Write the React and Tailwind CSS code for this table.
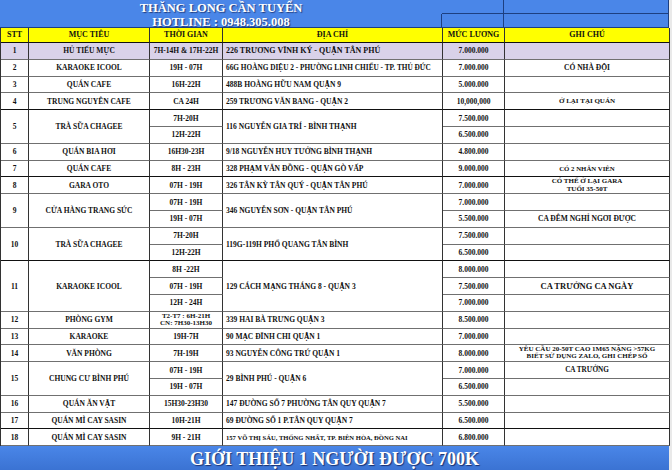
import React from "react";

const rows = [
  { stt: "1", name: "HỦ TIẾU MỰC", times: ["7H-14H & 17H-22H"], addr: "226 TRƯƠNG VĨNH KÝ - QUẬN TÂN PHÚ", as: "text-[8px]", sal: ["7.000.000"], notes: [""], bg: "lav" },
  { stt: "2", name: "KARAOKE ICOOL", times: ["19H - 07H"], addr: "66G HOÀNG DIỆU 2 - PHƯỜNG LINH CHIỂU - TP. THỦ ĐỨC", as: "text-[7.3px]", sal: ["7.000.000"], notes: ["CÓ NHÀ ĐỘI"] },
  { stt: "3", name: "QUÁN CAFE", times: ["16H-22H"], addr: "488B HOÀNG HỮU NAM QUẬN 9", sal: ["5.000.000"], notes: [""] },
  { stt: "4", name: "TRUNG NGUYÊN CAFE", times: ["CA 24H"], addr: "259 TRƯƠNG VĂN BANG - QUẬN 2", sal: ["10,000,000"], notes: ["Ở LẠI TẠI QUÁN"], ns: "text-[7px]", thick: true },
  { stt: "5", name: "TRÀ SỮA CHAGEE", times: ["7H-20H", "12H-22H"], addr: "116 NGUYỄN GIA TRÍ - BÌNH THẠNH", sal: ["7.500.000", "6.500.000"], notes: ["", ""] },
  { stt: "6", name: "QUÁN BIA HƠI", times: ["16H30-23H"], addr: "9/18 NGUYỄN HUY TƯỞNG BÌNH THẠNH", sal: ["4.800.000"], notes: [""] },
  { stt: "7", name: "QUÁN CAFE", times: ["8H - 23H"], addr: "328 PHẠM VĂN ĐỒNG - QUẬN GÒ VẤP", sal: ["9.000.000"], notes: ["CÓ 2 NHÂN VIÊN"], ns: "text-[6.8px]", thick: true },
  { stt: "8", name: "GARA OTO", times: ["07H - 19H"], addr: "326 TÂN KỲ TÂN QUÝ  - QUẬN TÂN PHÚ", sal: ["7.000.000"], notes: [["CÓ THỂ Ở LẠI GARA", "TUỔI 35-50T"]], ns: "text-[7.5px] leading-[8px]" },
  { stt: "9", name: "CỬA HÀNG TRANG SỨC", times: ["07H - 19H", "19H - 07H"], addr: "346 NGUYỄN SƠN - QUẬN TÂN PHÚ", sal: ["7.000.000", "5.500.000"], notes: ["", "CA  ĐÊM NGHỈ NGƠI ĐƯỢC"], ns: "text-[7.5px]" },
  { stt: "10", name: "TRÀ SỮA CHAGEE", times: ["7H-20H", "12H-22H"], addr: "119G-119H PHỔ QUANG TÂN BÌNH", sal: ["7.500.000", "6.500.000"], notes: ["", ""], thick: true },
  { stt: "11", name: "KARAOKE ICOOL", times: ["8H -22H", "07H - 19H", "12H - 24H"], addr: "129 CÁCH MẠNG THÁNG 8 - QUẬN 3", sal: ["8.000.000", "7.500.000", "7.000.000"], notes: ["", "CA TRƯỞNG CA NGÀY", ""], ns: "text-[8.5px]" },
  { stt: "12", name: "PHÒNG GYM", times: [["T2-T7 : 6H-21H", "CN: 7H30-13H30"]], addr: "339 HAI BÀ TRƯNG QUẬN 3", sal: ["8.500.000"], notes: [""] },
  { stt: "13", name: "KARAOKE", times: ["19H-7H"], addr: "90 MẠC ĐĨNH CHI QUẬN 1", sal: ["7.000.000"], notes: [""] },
  { stt: "14", name: "VĂN PHÒNG", times: ["7H-19H"], addr: "93 NGUYỄN CÔNG TRỨ QUẬN 1", sal: ["8.000.000"], notes: [["YÊU CẦU 20-50T CAO 1M65 NẶNG >57KG", "BIẾT SỬ DỤNG ZALO, GHI CHÉP SỔ"]], ns: "text-[7px] leading-[7.5px]" },
  { stt: "15", name: "CHUNG CƯ BÌNH PHÚ", times: ["07H - 19H", "19H - 07H"], addr: "29 BÌNH PHÚ - QUẬN 6", sal: ["7.000.000", "6.500.000"], notes: ["CA TRƯỞNG", ""], ns: "text-[7.2px]" },
  { stt: "16", name: "QUÁN ĂN VẶT", times: ["15H30-23H30"], addr: "147 ĐƯỜNG SỐ 7 PHƯỜNG TÂN QUY QUẬN 7", sal: ["5.500.000"], notes: [""] },
  { stt: "17", name: "QUÁN MÌ CAY SASIN", times: ["10H-21H"], addr: "69 ĐƯỜNG SỐ 1 P.TÂN QUY QUẬN 7", sal: ["6.500.000"], notes: [""], thick: true },
  { stt: "18", name: "QUÁN MÌ CAY SASIN", times: ["9H - 21H"], addr: "157 VÕ THỊ SÁU, THỐNG NHẤT, TP. BIÊN HÒA, ĐỒNG NAI", as: "text-[6.6px]", sal: ["6.800.000"], notes: [""] },
];

function Content({ v, cls = "" }) {
  if (Array.isArray(v)) {
    return (
      <div className={`flex flex-col items-center leading-[7px] text-[7px] ${cls}`}>
        {v.map((l, i) => (
          <span key={i}>{l}</span>
        ))}
      </div>
    );
  }
  return <span className={cls}>{v}</span>;
}

function Cell({ children, span = 1, left = false, thick = false, bg = "" }) {
  const spanCls = span === 3 ? "row-span-3" : span === 2 ? "row-span-2" : "";
  const bCls = thick ? "border-b-[#111]" : "border-b-[#707070]";
  return (
    <div
      className={`${spanCls} ${bCls} ${bg} flex items-center overflow-hidden whitespace-nowrap border-b border-r border-r-[#333] ${
        left ? "justify-start pl-[3px]" : "justify-center text-center"
      }`}
    >
      {children}
    </div>
  );
}

export default function App() {
  const cols = "grid grid-cols-[28px_121px_73px_220px_62px_165px]";
  return (
    <div
      className="w-[672px] h-[470px] overflow-hidden bg-[#e9e9e9] text-[#111] font-bold"
      style={{ fontFamily: '"Liberation Serif", "Times New Roman", serif' }}
    >
      <div className="w-[669px] bg-white">
        {/* Top band */}
        <div className={`${cols} grid-rows-[14px_14px] bg-[#4a86e8]`}>
          <div className="col-span-4 row-span-2 flex flex-col items-center justify-center pt-[4px] text-white text-[12.5px] leading-[13.5px] [text-shadow:1px_1px_1px_rgba(0,0,40,0.55)] border-b border-b-[#1d3f80]">
            <span>THĂNG LONG CẦN TUYỂN</span>
            <span>HOTLINE : 0948.305.008</span>
          </div>
          <div className="border-b border-r border-[#1d3f80]"></div>
          <div className="border-b border-r border-[#1d3f80]"></div>
          <div className="border-b border-r border-l border-[#1d3f80] ml-[-1px]"></div>
          <div className="border-b border-r border-[#1d3f80]"></div>
        </div>

        {/* Header row */}
        <div className={`${cols} h-[15px] bg-[#ffff00] text-[8px] border-l border-l-[#333]`}>
          {["STT", "MỤC TIÊU", "THỜI GIAN", "ĐỊA CHỈ", "MỨC LƯƠNG", "GHI CHÚ"].map((h) => (
            <Cell key={h} thick>
              {h}
            </Cell>
          ))}
        </div>

        {/* Body */}
        <div className={`${cols} auto-rows-[16.8px] text-[7.5px] leading-[9px] border-l border-l-[#333]`}>
          {rows.map((r) => {
            const n = r.times.length;
            const bg = r.bg === "lav" ? "bg-[#d9d2e9]" : "";
            const cells = [];
            cells.push(
              <Cell key="s" span={n} thick={r.thick} bg={bg}>
                {r.stt}
              </Cell>
            );
            cells.push(
              <Cell key="n" span={n} thick={r.thick} bg={bg}>
                {r.name}
              </Cell>
            );
            cells.push(
              <Cell key="t0" thick={r.thick && n === 1} bg={bg}>
                <Content v={r.times[0]} />
              </Cell>
            );
            cells.push(
              <Cell key="a" span={n} left thick={r.thick} bg={bg}>
                <span className={r.as || ""}>{r.addr}</span>
              </Cell>
            );
            cells.push(
              <Cell key="m0" thick={r.thick && n === 1} bg={bg}>
                {r.sal[0]}
              </Cell>
            );
            cells.push(
              <Cell key="g0" thick={r.thick && n === 1} bg={bg}>
                <Content v={r.notes[0]} cls={r.ns || ""} />
              </Cell>
            );
            for (let i = 1; i < n; i++) {
              const last = i === n - 1 && r.thick;
              cells.push(
                <Cell key={"t" + i} thick={last} bg={bg}>
                  <Content v={r.times[i]} />
                </Cell>
              );
              cells.push(
                <Cell key={"m" + i} thick={last} bg={bg}>
                  {r.sal[i]}
                </Cell>
              );
              cells.push(
                <Cell key={"g" + i} thick={last} bg={bg}>
                  <Content v={r.notes[i]} cls={r.ns || ""} />
                </Cell>
              );
            }
            return <React.Fragment key={r.stt}>{cells}</React.Fragment>;
          })}
        </div>

        {/* Bottom banner */}
        <div className="h-[25px] bg-gradient-to-b from-[#4a86e8] to-[#3a72d2] flex items-center justify-center text-white text-[18px] leading-none [text-shadow:1px_1px_1px_rgba(0,0,40,0.6)]">
          GIỚI THIỆU 1 NGƯỜI ĐƯỢC 700K
        </div>
      </div>
    </div>
  );
}
